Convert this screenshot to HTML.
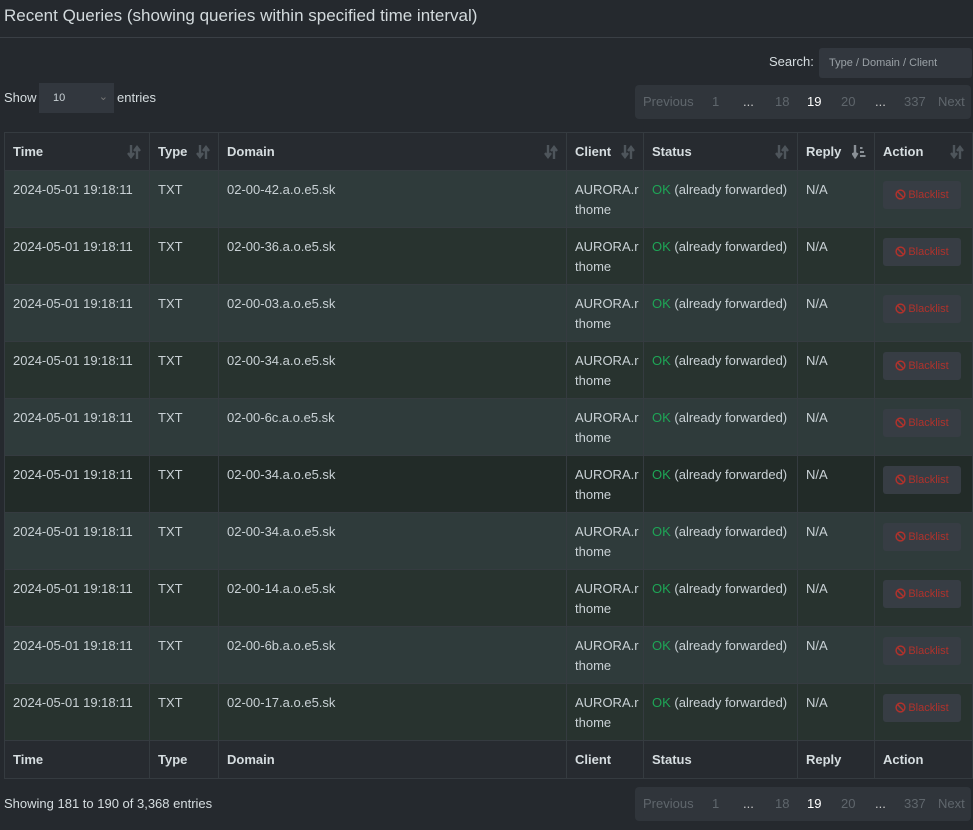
<!DOCTYPE html>
<html><head><style>
*{box-sizing:border-box;margin:0;padding:0}
body{width:973px;height:830px;background:#25292e;font-family:"Liberation Sans",sans-serif;font-size:13px;color:#c9d1d5;position:relative;overflow:hidden}
.title{position:absolute;left:4px;top:6px;font-size:17px;color:#d3dadd}
.hr{position:absolute;left:0;right:0;top:37px;border-top:1px solid #3a3f45}
.abs{position:absolute}
.pag{position:absolute;left:635px;width:336px;height:34px;background:#30353b;border-radius:4px;color:#5f666c;font-size:13px}
.pag span{position:absolute;top:9px}
table{position:absolute;left:4px;top:132px;width:968px;border-collapse:collapse;table-layout:fixed}
td,th{border:1px solid #353b40;text-align:left;vertical-align:top;padding:0 8px}
th{height:38px;vertical-align:middle;background:#272b30;font-weight:bold;color:#d6dde0;position:relative}
td{height:57px;padding-top:9px;line-height:20px}
tr.o td{background:#2f3b3b}
tr.e td{background:#28332f}
tr.h td{background:#222b28}
.s{position:absolute;right:8px;top:11px;width:14px;height:16px}
.ok{color:#1ea556}
.bl{display:inline-block;width:78px;height:28px;background:#373d44;border-radius:3px;color:#b0322c;font-size:11px;text-align:center;line-height:28px;margin-top:1px}
.bl svg{vertical-align:-2px;margin-right:2px}
</style></head><body>
<svg width="0" height="0" style="position:absolute"><defs>
<symbol id="srt" viewBox="0 0 14 16"><path d="M4 1v11M1 9l3 4 3-4M10 15V4M7 7l3-4 3 4" stroke="#4e555b" stroke-width="2.4" fill="none"/></symbol>
<symbol id="srt2" viewBox="0 0 14 16"><path d="M3 1v11M0.5 9l2.5 4 2.5-4" stroke="#8a9096" stroke-width="2.4" fill="none"/><rect x="8" y="3" width="2.5" height="2" fill="#8a9096"/><rect x="8" y="7" width="4" height="2" fill="#8a9096"/><rect x="8" y="11" width="5.5" height="2" fill="#8a9096"/></symbol>
<symbol id="ban" viewBox="0 0 12 12"><circle cx="6" cy="6" r="4.8" stroke="#b0322c" stroke-width="1.6" fill="none"/><path d="M2.6 2.6l6.8 6.8" stroke="#b0322c" stroke-width="1.6"/></symbol>
</defs></svg>
<div class="title">Recent Queries (showing queries within specified time interval)</div>
<div class="hr"></div>
<div class="abs" style="left:769px;top:54px;color:#d6dde0">Search:</div>
<div class="abs" style="left:819px;top:48px;width:153px;height:30px;background:#32373e;border-radius:3px;color:#9aa1a6;font-size:11px;padding:9px 10px">Type / Domain / Client</div>
<div class="abs" style="left:4px;top:90px;color:#d6dde0">Show</div>
<div class="abs" style="left:39px;top:83px;width:75px;height:30px;background:#32373e;font-size:11px;padding:9px 14px;color:#c9d1d5">10<span style="position:absolute;right:6px;top:7px;color:#777">⌄</span></div>
<div class="abs" style="left:117px;top:90px;color:#d6dde0">entries</div>
<div class="pag" style="top:85px"><span style="left:8px">Previous</span><span style="left:77px">1</span><span style="left:108px;color:#ccc">...</span><span style="left:140px">18</span><span style="left:172px;color:#fff">19</span><span style="left:206px">20</span><span style="left:240px;color:#ccc">...</span><span style="left:269px">337</span><span style="left:303px">Next</span></div>
<table>
<colgroup><col style="width:145px"><col style="width:69px"><col style="width:348px"><col style="width:77px"><col style="width:154px"><col style="width:77px"><col style="width:98px"></colgroup>
<tr><th>Time<svg class="s"><use href="#srt"/></svg></th><th>Type<svg class="s"><use href="#srt"/></svg></th><th>Domain<svg class="s"><use href="#srt"/></svg></th><th>Client<svg class="s"><use href="#srt"/></svg></th><th>Status<svg class="s"><use href="#srt"/></svg></th><th>Reply<svg class="s"><use href="#srt2"/></svg></th><th>Action<svg class="s"><use href="#srt"/></svg></th></tr>
<tr class="o"><td>2024-05-01 19:18:11</td><td>TXT</td><td>02-00-42.a.o.e5.sk</td><td>AURORA.r thome</td><td><span class="ok">OK</span> (already forwarded)</td><td>N/A</td><td><span class="bl"><svg width="11" height="11"><use href="#ban"/></svg>Blacklist</span></td></tr>
<tr class="e"><td>2024-05-01 19:18:11</td><td>TXT</td><td>02-00-36.a.o.e5.sk</td><td>AURORA.r thome</td><td><span class="ok">OK</span> (already forwarded)</td><td>N/A</td><td><span class="bl"><svg width="11" height="11"><use href="#ban"/></svg>Blacklist</span></td></tr>
<tr class="o"><td>2024-05-01 19:18:11</td><td>TXT</td><td>02-00-03.a.o.e5.sk</td><td>AURORA.r thome</td><td><span class="ok">OK</span> (already forwarded)</td><td>N/A</td><td><span class="bl"><svg width="11" height="11"><use href="#ban"/></svg>Blacklist</span></td></tr>
<tr class="e"><td>2024-05-01 19:18:11</td><td>TXT</td><td>02-00-34.a.o.e5.sk</td><td>AURORA.r thome</td><td><span class="ok">OK</span> (already forwarded)</td><td>N/A</td><td><span class="bl"><svg width="11" height="11"><use href="#ban"/></svg>Blacklist</span></td></tr>
<tr class="o"><td>2024-05-01 19:18:11</td><td>TXT</td><td>02-00-6c.a.o.e5.sk</td><td>AURORA.r thome</td><td><span class="ok">OK</span> (already forwarded)</td><td>N/A</td><td><span class="bl"><svg width="11" height="11"><use href="#ban"/></svg>Blacklist</span></td></tr>
<tr class="h"><td>2024-05-01 19:18:11</td><td>TXT</td><td>02-00-34.a.o.e5.sk</td><td>AURORA.r thome</td><td><span class="ok">OK</span> (already forwarded)</td><td>N/A</td><td><span class="bl"><svg width="11" height="11"><use href="#ban"/></svg>Blacklist</span></td></tr>
<tr class="o"><td>2024-05-01 19:18:11</td><td>TXT</td><td>02-00-34.a.o.e5.sk</td><td>AURORA.r thome</td><td><span class="ok">OK</span> (already forwarded)</td><td>N/A</td><td><span class="bl"><svg width="11" height="11"><use href="#ban"/></svg>Blacklist</span></td></tr>
<tr class="e"><td>2024-05-01 19:18:11</td><td>TXT</td><td>02-00-14.a.o.e5.sk</td><td>AURORA.r thome</td><td><span class="ok">OK</span> (already forwarded)</td><td>N/A</td><td><span class="bl"><svg width="11" height="11"><use href="#ban"/></svg>Blacklist</span></td></tr>
<tr class="o"><td>2024-05-01 19:18:11</td><td>TXT</td><td>02-00-6b.a.o.e5.sk</td><td>AURORA.r thome</td><td><span class="ok">OK</span> (already forwarded)</td><td>N/A</td><td><span class="bl"><svg width="11" height="11"><use href="#ban"/></svg>Blacklist</span></td></tr>
<tr class="e"><td>2024-05-01 19:18:11</td><td>TXT</td><td>02-00-17.a.o.e5.sk</td><td>AURORA.r thome</td><td><span class="ok">OK</span> (already forwarded)</td><td>N/A</td><td><span class="bl"><svg width="11" height="11"><use href="#ban"/></svg>Blacklist</span></td></tr>
<tr><th>Time</th><th>Type</th><th>Domain</th><th>Client</th><th>Status</th><th>Reply</th><th>Action</th></tr>
</table>
<div class="abs" style="left:4px;top:796px;color:#d6dde0">Showing 181 to 190 of 3,368 entries</div>
<div class="pag" style="top:787px"><span style="left:8px">Previous</span><span style="left:77px">1</span><span style="left:108px;color:#ccc">...</span><span style="left:140px">18</span><span style="left:172px;color:#fff">19</span><span style="left:206px">20</span><span style="left:240px;color:#ccc">...</span><span style="left:269px">337</span><span style="left:303px">Next</span></div>
</body></html>
